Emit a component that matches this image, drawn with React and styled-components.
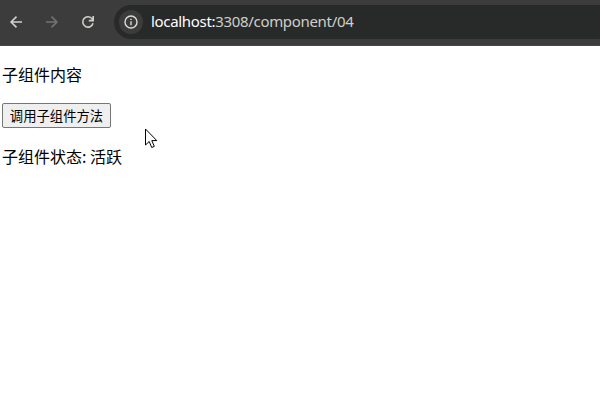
import React from 'react';
import styled, { createGlobalStyle } from 'styled-components';

const Global = createGlobalStyle`
  * { box-sizing: border-box; }
  body { margin: 0; background: #fff; overflow: hidden; }
`;
const Page = styled.div`
  position: relative;
  width: 600px;
  height: 400px;
  overflow: hidden;
  background: #fff;
`;
const Toolbar = styled.header`
  display: flex;
  align-items: flex-start;
  height: 46px;
  background: #3c3c3c;
  border-bottom: 1px solid #484848;
`;
const NavGroup = styled.nav`
  display: flex;
  align-items: center;
  gap: 20px;
  height: 44px;
  padding-left: 8px;
  flex: 0 0 114px;
`;
const NavIcon = styled.svg`
  width: 16px;
  height: 16px;
  flex: none;
  fill: none;
  stroke: ${(p) => (p.$muted ? '#707473' : '#d0d0cc')};
  stroke-width: 1.6;
`;
const AddressBar = styled.div`
  display: flex;
  align-items: center;
  flex: 1;
  height: 34px;
  margin-top: 5px;
  padding-left: 5px;
  border-radius: 17px 0 0 17px;
  background: #282a29;
`;
const SiteInfo = styled.span`
  display: flex;
  align-items: center;
  justify-content: center;
  width: 24px;
  height: 24px;
  border-radius: 50%;
  background: #3c3c3c;
`;
const Url = styled.span`
  margin-left: 8px;
  padding-bottom: 2px;
  font: 15px/20px "Noto Sans", sans-serif;
  letter-spacing: -0.32px;
  color: #cfcfcb;
  white-space: nowrap;
`;
const Host = styled.span`
  color: #fff;
`;
const Content = styled.main`
  display: flex;
  flex-direction: column;
  align-items: flex-start;
  padding: 17px 2px;
  font: 16px/22px "Noto Sans CJK SC", sans-serif;
  color: #000;
`;
const Line = styled.p`
  margin: 0;
`;
const Button = styled.button`
  width: 109px;
  height: 25px;
  margin: 18px 0 17px;
  padding: 0;
  border: 1px solid #767676;
  border-radius: 2px;
  background: #efefef;
  color: #000;
  font: 13.333px/20px "Noto Sans CJK SC", sans-serif;
`;
const Cursor = styled.svg`
  position: absolute;
  left: 145px;
  top: 128px;
  width: 13px;
  height: 21px;
`;

export default function App() {
  return (
    <Page>
      <Global />
      <Toolbar>
        <NavGroup>
          <NavIcon viewBox="0 0 16 16"><path d="M14 8H3.4M8.5 2.6 3.1 8l5.4 5.4" /></NavIcon>
          <NavIcon $muted viewBox="0 0 16 16"><path d="M2 8h10.6M7.5 2.6 12.9 8l-5.4 5.4" /></NavIcon>
          <NavIcon viewBox="0 0 16 16"><path d="M13 9.2A5.2 5.2 0 1 1 12.2 4.9L13 6.2M13.2 2v4.6H8.8" /></NavIcon>
        </NavGroup>
        <AddressBar>
          <SiteInfo>
            <svg width="14" height="14" viewBox="0 0 14 14" fill="none" stroke="#dcdcd8" strokeWidth="1.4">
              <circle cx="7" cy="7" r="6" /><path d="M7 6.3v4M7 3.7v1.4" />
            </svg>
          </SiteInfo>
          <Url><Host>localhost:</Host>3308/component/04</Url>
        </AddressBar>
      </Toolbar>
      <Content>
        <Line>子组件内容</Line>
        <Button>调用子组件方法</Button>
        <Line>子组件状态: 活跃</Line>
      </Content>
      <Cursor viewBox="0 0 13 21">
        <path d="M.5 1v16l3.7-3.5 2.5 6 2.6-1.1-2.5-5.8h5Z" fill="#fff" stroke="#000" />
      </Cursor>
    </Page>
  );
}
